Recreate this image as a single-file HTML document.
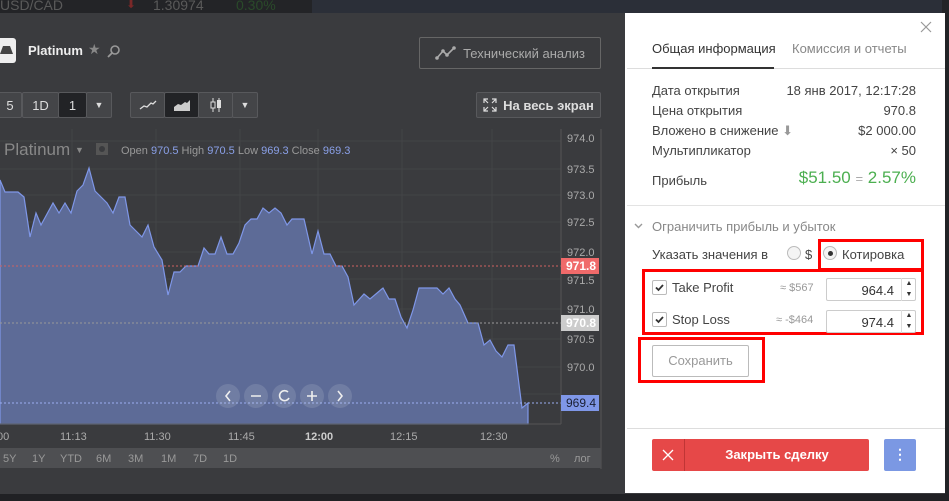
<!DOCTYPE html><html><head><meta charset="utf-8"><style>
*{margin:0;padding:0;box-sizing:border-box}
body{width:949px;height:501px;overflow:hidden;background:#222326;font-family:"Liberation Sans",sans-serif;position:relative}
.a{position:absolute}
.btn{position:absolute;border:1px solid #58595c;background:#444548;color:#ddd;font-size:13px;display:flex;align-items:center;justify-content:center;border-radius:2px}
.rp{font-size:13px;color:#333}
.lbl{position:absolute;left:652px;color:#444}
.val{position:absolute;right:33px;color:#444;text-align:right}
</style></head><body>
<div class="a" style="left:0;top:0;width:949px;height:13px;background:#232427"></div>
<div class="a" style="left:312px;top:0;width:630px;height:13px;background:#2b2f38"></div>
<div class="a" style="left:0;top:-3px;font-size:14px;color:#5a5a5a">USD/CAD</div>
<div class="a" style="left:126px;top:-3px;font-size:12px;color:#7a2828">⬇</div>
<div class="a" style="left:153px;top:-3px;font-size:14px;color:#5a5a5a">1.30974</div>
<div class="a" style="left:236px;top:-3px;font-size:14px;color:#2a4a2a">0.30%</div>
<div class="a" style="left:0;top:13px;width:945px;height:481px;background:#3a3b3e"></div>
<div class="a" style="left:0;top:494px;width:949px;height:7px;background:#202124"></div>
<!-- header -->
<div class="a" style="left:0;top:38px;width:16px;height:25px;background:#eee;border-radius:0 3px 3px 0"></div>
<svg class="a" style="left:0;top:44px" width="14" height="12"><path d="M3 2H10L13 10H0Z" fill="#444"/></svg>
<div class="a" style="left:28px;top:43px;font-size:13px;font-weight:bold;color:#eee">Platinum</div>
<div class="a" style="left:88px;top:41px;font-size:14px;color:#888">★</div>
<svg class="a" style="left:107px;top:44px" width="14" height="14"><circle cx="8" cy="6" r="4" fill="none" stroke="#999" stroke-width="1.6"/><path d="M5 9L1 13" stroke="#999" stroke-width="1.8"/></svg>
<div class="btn" style="left:419px;top:37px;width:182px;height:32px;background:#3a3b3e;color:#aaa;border-color:#666">
<svg width="22" height="14" style="margin-right:6px"><path d="M2 12L8 5L12 9L19 2" fill="none" stroke="#aaa" stroke-width="1.6"/><circle cx="2" cy="12" r="1.8" fill="#aaa"/><circle cx="8" cy="5" r="1.8" fill="#aaa"/><circle cx="12" cy="9" r="1.8" fill="#aaa"/><circle cx="19" cy="2" r="1.8" fill="#aaa"/></svg>Технический анализ</div>
<!-- toolbar -->
<div class="btn" style="left:-2px;top:92px;width:24px;height:26px">5</div>
<div class="btn" style="left:22px;top:92px;width:37px;height:26px">1D</div>
<div class="btn" style="left:58px;top:92px;width:29px;height:26px;background:#222326">1</div>
<div class="btn" style="left:86px;top:92px;width:26px;height:26px;font-size:9px">▼</div>
<div class="btn" style="left:130px;top:92px;width:35px;height:26px"><svg width="18" height="10"><path d="M1 9L5 6L8 7L12 3L14 4L17 1" fill="none" stroke="#ddd" stroke-width="1.3"/></svg></div>
<div class="btn" style="left:164px;top:92px;width:35px;height:26px;background:#222326"><svg width="18" height="12"><path d="M1 8L5 5L8 6L12 3L14 4L17 1V12H1Z" fill="#ccc"/></svg></div>
<div class="btn" style="left:198px;top:92px;width:35px;height:26px"><svg width="14" height="16"><path d="M4 1V15M10 1V15" stroke="#ddd"/><rect x="2" y="5" width="4" height="6" fill="#3a3b3e" stroke="#ddd"/><rect x="8" y="3" width="4" height="8" fill="#ddd"/></svg></div>
<div class="btn" style="left:232px;top:92px;width:26px;height:26px;font-size:9px">▼</div>
<div class="btn" style="left:476px;top:92px;width:125px;height:26px;font-size:13px;font-weight:bold"><svg width="14" height="14" style="margin-right:6px"><path d="M1 5V1H5M9 1H13V5M13 9V13H9M5 13H1V9M1 1L5 5M13 1L9 5M13 13L9 9M1 13L5 9" fill="none" stroke="#ddd" stroke-width="1.2"/></svg>На весь экран</div>
<!-- chart -->
<svg class="a" style="left:0;top:129px" width="602" height="340">
<rect x="0" y="0" width="602" height="338" fill="#3a3b3e"/>
<g stroke="#434447" stroke-width="1">
<path d="M72 0V295M156 0V295M240 0V295M318 0V295M402 0V295M492 0V295"/>
<path d="M0 12H561M0 40H561M0 66H561M0 93H561M0 123H561M0 150H561M0 180H561M0 210H561M0 238H561M0 265H561"/>
</g>
<path d="M0 51L5 63L18 63L24 68L30 108L36 84L41 96L53 74L59 84L65 74L71 84L77 62L83 56L89 39L95 62L107 74L113 84L119 68L125 68L130 96L142 108L148 96L154 118L162 131L168 166L174 143L180 143L186 137L198 137L204 119L209 125L215 125L221 108L227 125L233 125L239 114L245 96L251 90L257 90L263 79L269 84L275 79L281 84L287 96L292 90L304 90L312 125L318 102L324 125L330 125L336 137L342 137L348 148L354 176L364 165L370 170L383 159L389 170L395 170L401 188L407 199L413 181L419 159L437 159L443 165L449 159L455 170L460 176L468 194L478 194L484 216L490 211L496 222L502 228L508 216L514 216L522 279L528 274L528 295L0 295Z" fill="#5d6b97" stroke="#7f97e8" stroke-width="1.2"/>
<path d="M0 137H561" stroke="#d06060" stroke-dasharray="2 2"/>
<path d="M0 194H561" stroke="#999" stroke-dasharray="2 2"/>
<path d="M0 274H561" stroke="#9aaef0" stroke-dasharray="2 2"/>
<path d="M561 0V295M601 0V340M0 295H561" stroke="#555"/>
<g font-size="11" fill="#aaa" font-family="Liberation Sans">
<text x="567" y="13">974.0</text><text x="567" y="44">973.5</text><text x="567" y="70">973.0</text><text x="567" y="97">972.5</text><text x="567" y="127">972.0</text><text x="567" y="155">971.5</text><text x="567" y="184">971.0</text><text x="567" y="214">970.5</text><text x="567" y="242">970.0</text>
</g>
<rect x="561" y="129" width="38" height="16" fill="#f06a6a"/><text x="566" y="141" font-size="12" font-weight="bold" fill="#fff">971.8</text>
<rect x="561" y="186" width="38" height="16" fill="#ccc"/><text x="566" y="198" font-size="12" font-weight="bold" fill="#fff">970.8</text>
<rect x="561" y="266" width="38" height="16" fill="#7f97e8"/><text x="566" y="278" font-size="12" fill="#1a1f33">969.4</text>
<g font-size="11" fill="#aaa"><text x="-6" y="311">:00</text><text x="60" y="311">11:13</text><text x="144" y="311">11:30</text><text x="228" y="311">11:45</text><text x="305" y="311" font-weight="bold" fill="#ccc">12:00</text><text x="390" y="311">12:15</text><text x="480" y="311">12:30</text></g>
<rect x="0" y="319" width="601" height="20" fill="#4e4f52"/>
<g font-size="11" fill="#999"><text x="3" y="333">5Y</text><text x="32" y="333">1Y</text><text x="60" y="333">YTD</text><text x="96" y="333">6M</text><text x="128" y="333">3M</text><text x="161" y="333">1M</text><text x="193" y="333">7D</text><text x="223" y="333">1D</text><text x="550" y="333">%</text><text x="574" y="333">лог</text></g>
<g fill="rgba(255,255,255,0.12)"><circle cx="228" cy="267" r="12"/><circle cx="256" cy="267" r="12"/><circle cx="284" cy="267" r="12"/><circle cx="312" cy="267" r="12"/><circle cx="340" cy="267" r="12"/></g>
<g stroke="#eee" stroke-width="1.6" fill="none"><path d="M230 262L226 267L230 272M251 267H261M307 267H317M312 262V272M338 262L342 267L338 272"/><path d="M288 263A5 5 0 1 0 289 269"/></g>
<text x="4" y="26" font-size="17" fill="#888">Platinum</text><text x="75" y="24" font-size="9" fill="#888">▼</text>
<rect x="96" y="14" width="12" height="12" fill="#555"/><circle cx="102" cy="20" r="3" fill="#3a3b3e"/>
<g font-size="11"><text x="121" y="25" fill="#999">Open <tspan fill="#8aa0e8">970.5</tspan> High <tspan fill="#8aa0e8">970.5</tspan> Low <tspan fill="#8aa0e8">969.3</tspan> Close <tspan fill="#8aa0e8">969.3</tspan></text></g>
</svg>
<!-- right panel -->
<div class="a rp" style="left:625px;top:13px;width:320px;height:480px;background:#fff"></div>
<svg class="a" style="left:920px;top:21px" width="12" height="12"><path d="M1 1L11 11M11 1L1 11" stroke="#999" stroke-width="1.2"/></svg>
<div class="a" style="left:652px;top:41px;font-size:13px;color:#333">Общая информация</div>
<div class="a" style="left:792px;top:41px;font-size:13px;color:#888">Комиссия и отчеты</div>
<div class="a" style="left:627px;top:68px;width:318px;height:1px;background:#ddd"></div>
<div class="a" style="left:652px;top:67px;width:122px;height:2px;background:#333"></div>
<div class="rp">
<div class="lbl" style="top:83px">Дата открытия</div><div class="val" style="top:83px">18 янв 2017, 12:17:28</div>
<div class="lbl" style="top:103px">Цена открытия</div><div class="val" style="top:103px">970.8</div>
<div class="lbl" style="top:123px">Вложено в снижение <span style="color:#999">⬇</span></div><div class="val" style="top:123px">$2 000.00</div>
<div class="lbl" style="top:143px">Мультипликатор</div><div class="val" style="top:143px">× 50</div>
<div class="lbl" style="top:173px">Прибыль</div><div class="val" style="top:168px;font-size:17px;color:#4caf50">$51.50 <span style="color:#aaa;font-size:13px">=</span> 2.57%</div>
</div>
<div class="a" style="left:627px;top:205px;width:318px;height:1px;background:#e3e3e3"></div>
<svg class="a" style="left:634px;top:223px" width="9" height="6"><path d="M1 1L4.5 4.5L8 1" fill="none" stroke="#999" stroke-width="1.4"/></svg>
<div class="a" style="left:652px;top:219px;font-size:13px;color:#888">Ограничить прибыль и убыток</div>
<div class="a" style="left:652px;top:247px;font-size:13px;color:#444">Указать значения в</div>
<div class="a" style="left:787px;top:246px;width:14px;height:14px;border:1px solid #bbb;border-radius:50%;background:#f4f4f4"></div>
<div class="a" style="left:805px;top:247px;font-size:13px;color:#444">$</div>
<div class="a" style="left:818px;top:239px;width:106px;height:32px;border:3px solid #f00"></div>
<div class="a" style="left:823px;top:246px;width:14px;height:14px;border:1px solid #bbb;border-radius:50%;background:#f4f4f4"></div>
<div class="a" style="left:828px;top:251px;width:5px;height:5px;border-radius:50%;background:#333"></div>
<div class="a" style="left:842px;top:247px;font-size:13px;color:#444">Котировка</div>
<div class="a" style="left:642px;top:269px;width:282px;height:66px;border:3px solid #f00"></div>
<div class="a" style="left:652px;top:280px;width:15px;height:15px;border:1px solid #bbb;border-radius:2px"><svg width="13" height="13" style="display:block"><path d="M3 6.5L5.5 9L10 4" fill="none" stroke="#333" stroke-width="1.8"/></svg></div>
<div class="a" style="left:672px;top:280px;font-size:13px;color:#444">Take Profit</div>
<div class="a" style="left:780px;top:282px;font-size:11px;color:#999">≈ $567</div>
<div class="a" style="left:826px;top:278px;width:90px;height:23px;border:1px solid #ccc;border-radius:2px;font-size:13px;color:#333;text-align:right;padding:4px 21px 0 0">964.4</div>
<div class="a" style="left:901px;top:278px;width:15px;height:23px;border-left:1px solid #ddd;font-size:7px;color:#333;text-align:center;line-height:11px">▲<br>▼</div>
<div class="a" style="left:652px;top:312px;width:15px;height:15px;border:1px solid #bbb;border-radius:2px"><svg width="13" height="13" style="display:block"><path d="M3 6.5L5.5 9L10 4" fill="none" stroke="#333" stroke-width="1.8"/></svg></div>
<div class="a" style="left:672px;top:312px;font-size:13px;color:#444">Stop Loss</div>
<div class="a" style="left:776px;top:314px;font-size:11px;color:#999">≈ -$464</div>
<div class="a" style="left:826px;top:310px;width:90px;height:23px;border:1px solid #ccc;border-radius:2px;font-size:13px;color:#333;text-align:right;padding:4px 21px 0 0">974.4</div>
<div class="a" style="left:901px;top:310px;width:15px;height:23px;border-left:1px solid #ddd;font-size:7px;color:#333;text-align:center;line-height:11px">▲<br>▼</div>
<div class="a" style="left:638px;top:337px;width:127px;height:46px;border:3px solid #f00"></div>
<div class="a" style="left:652px;top:345px;width:97px;height:32px;border:1px solid #bbb;border-radius:2px;font-size:13px;color:#999;text-align:center;line-height:30px">Сохранить</div>
<div class="a" style="left:627px;top:428px;width:318px;height:1px;background:#ddd"></div>
<div class="a" style="left:652px;top:439px;width:217px;height:32px;background:#e64848;border-radius:2px"></div>
<div class="a" style="left:684px;top:439px;width:1px;height:32px;background:#c03535"></div>
<svg class="a" style="left:662px;top:449px" width="12" height="12"><path d="M1 1L11 11M11 1L1 11" stroke="#fff" stroke-width="1.3"/></svg>
<div class="a" style="left:685px;top:447px;width:184px;text-align:center;font-size:13px;font-weight:bold;color:#fff">Закрыть сделку</div>
<div class="a" style="left:884px;top:439px;width:32px;height:32px;background:#7b98e3;border-radius:2px;color:#fff;text-align:center;font-size:14px;line-height:30px;font-weight:bold">⋮</div>
</body></html>
